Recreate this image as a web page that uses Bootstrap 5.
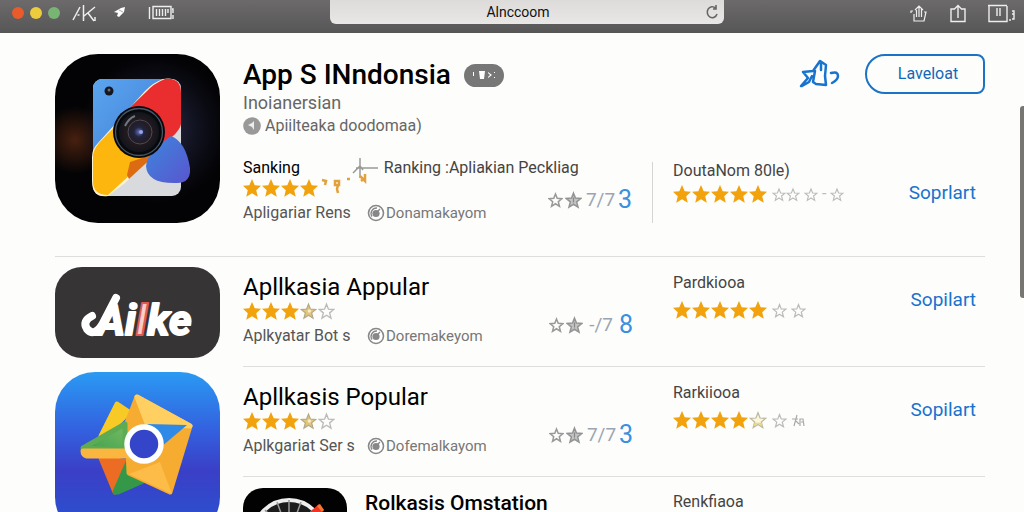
<!DOCTYPE html>
<html lang="id">
<head>
<meta charset="utf-8">
<meta name="viewport" content="width=device-width, initial-scale=1">
<title>App Store Indonesia</title>
<link href="https://cdn.jsdelivr.net/npm/bootstrap@5.3.0/dist/css/bootstrap.min.css" rel="stylesheet">
<style>
body{font-family:Roboto,"Liberation Sans",sans-serif;background:#fdfdfb;color:#555;font-size:16px;line-height:20px}
svg{display:block;flex:none}
button{background:none;border:0;padding:0}
.toolbar{display:grid;grid-template-columns:330px 1fr 300px;height:33px;background:linear-gradient(#6c6a6b,#575656);color:#f4f4f4;flex:none}
.lights{gap:6px;padding:0 12px}
.tools{gap:16px}
.dot{width:12px;height:12px;border-radius:50%}
.dot-r{background:#ea5b2c}.dot-y{background:#eccb3d}.dot-g{background:#78b474}
.addr{height:24px;width:100%;border:0;border-radius:0 0 6px 6px;background:linear-gradient(#dcdbda,#e8e7e6);color:#111;font-size:14px;text-align:center;padding:0 18px 0 0}
.reload{right:4px;top:4px;color:#666}
.actions{gap:20px}
.page-area{padding:21px 39px 0 55px}
.hero{gap:23px;padding-bottom:33px;border-bottom:1px solid #dededc}
.hero-head{height:103px}
.hero-mid{height:66px}
.hero-mid .ranking{height:22px}
.hero-entry{position:relative}
.split{width:1px;height:61px;background:#d5d5d3}
.list-area{gap:23px}
.icons{width:165px;flex:none;padding-top:10px;gap:14px}
h1{font-size:28px;line-height:34px;font-weight:500;color:#000;margin:0}
h2{font-size:24px;line-height:30px;font-weight:400;color:#000;margin:0}
.h2-strong{font-size:21px;font-weight:500}
.pill{width:40px;height:23px;border-radius:12px;background:#777;color:#fff}
.title-line{gap:13px}
.subtitle{font-size:18px;line-height:22px;color:#666}
.maker{line-height:24px;gap:4px;color:#666}
.btn-open{width:120px;height:40px;border:2px solid #1a73c4;border-radius:20px 8px 8px 20px;color:#1268b8;font-size:16px;padding-left:6px}
.entry{display:grid;grid-template-columns:minmax(0,1fr) 220px 92px}
.entry-row{height:110px;border-bottom:1px solid #dededc;padding-top:15px}
.last-row{padding-top:11px}
.entry-mid{margin-right:20px}
.stars{gap:1px;height:18px}
.gold{color:#f2a20c}.pale{color:#bbb}
.tags{margin-top:6px}
.tags span:first-child{width:124px}
.tags span:last-child{color:#777;gap:1px;font-size:15px}
.count{padding-right:20px;gap:2px;color:#999;font-size:20px;line-height:26px;margin-top:40px}
.count b{color:#3b8fe0;font-weight:400;font-size:25px;margin-left:4px}
.count i{font-style:normal;color:#9aa5b3;margin-left:2px;width:26px;text-align:right;white-space:nowrap;font-size:19px}
.label-dark{color:#444}
.rate{padding-top:1px}
.get{color:#1873cf;font-size:19px;line-height:24px;text-decoration:none;text-align:right;padding-right:9px}
.thumb{right:0;top:106px;width:4px;height:192px;background:#777673;border-radius:3px 0 0 3px}
</style>
</head>
<body class="vh-100 overflow-hidden d-flex flex-column position-relative">
<svg width="0" height="0" class="position-absolute" aria-hidden="true">
<symbol id="sf" viewBox="0 0 20 20"><path d="M10 0l3 6.900 7 .6-5.300 4.900 1.700 7.400L10 15.800l-6.400 4 1.700-7.400L0 7.500l7-.6z" fill="currentColor"/></symbol>
<symbol id="so" viewBox="0 0 20 20"><path d="M10 2l2.300 5.800 6.200.4-4.800 4 1.600 6.200L10 15l-5.300 3.400 1.600-6.200-4.800-4 6.200-.4z" fill="none" stroke="currentColor" stroke-width="1.600"/></symbol>
<symbol id="sh" viewBox="0 0 20 20"><path d="M10 2l2.300 5.800 6.200.4-4.800 4 1.600 6.200L10 15l-5.300 3.400 1.600-6.200-4.800-4 6.200-.4z" fill="#e3c679" stroke="#b3aa8a" stroke-width="1.500"/><circle cx="11" cy="10" r="2" fill="#f8edcc"/></symbol>
<symbol id="sq" viewBox="0 0 20 20"><path d="M10 2l2.300 5.800 6.200.4-4.800 4 1.600 6.200L10 15l-5.300 3.400 1.600-6.200-4.800-4 6.200-.4z" fill="#fbf6df" stroke="#bdb89e" stroke-width="1.400"/><path d="M6 13h8l1 4-5-3-5 3z" fill="#eed774"/></symbol>
<symbol id="sr" viewBox="0 0 20 20"><path d="M10 2l2.300 5.800 6.200.4-4.800 4 1.600 6.200L10 15l-5.300 3.400 1.600-6.200-4.800-4 6.200-.4z" fill="none" stroke="#999" stroke-width="2"/></symbol>
<symbol id="sg" viewBox="0 0 20 20"><path d="M10 2l2.300 5.800 6.200.4-4.800 4 1.600 6.200L10 15l-5.300 3.400 1.600-6.200-4.800-4 6.200-.4z" fill="#c4c4c4" stroke="#949494" stroke-width="1.800"/><path d="M10 7v6" stroke="#888" stroke-width="1.500"/></symbol>
<symbol id="eye" viewBox="0 0 18 18"><circle cx="9" cy="9" r="7.500" fill="#fff" stroke="#888" stroke-width="1.600"/><circle cx="9" cy="9.500" r="3.600" fill="#888"/><path d="M5 12.500A5.500 5.500 0 0 1 10 4M10 8l3-3" fill="none" stroke="#888" stroke-width="1.400"/></symbol>
</svg>

<header class="toolbar">
  <div class="d-flex align-items-center pb-2">
    <div class="lights d-flex"><span class="dot dot-r"></span><span class="dot dot-y"></span><span class="dot dot-g"></span></div>
    <div class="tools d-flex align-items-center">
    <svg width="26" height="18" viewBox="1 0 26 18" fill="none" stroke="#eee" stroke-width="1.500"><path d="M2 16L9 3M6.500 11h2M12.500 1v16M13 12L24 3M17 9l6 8M24 13v4"/></svg>
    <svg width="14" height="14" viewBox="0 0 14 14"><path d="M0 6l7-4 4-1-1 5-5 5-2-1 1-3z" fill="#fff"/><path d="M5 4l4 2" stroke="#aaa"/></svg>
    <svg class="ms-1" width="26" height="17" viewBox="0 0 26 17" fill="none" stroke="#eee" stroke-width="1.400"><path d="M1.500 3v12M5 2.500h18v12H5zM8.500 5v7M11.500 5v7M14.500 5v7M17.500 5v7M20 5v4M24 5h1v4M25 11v4"/></svg>
    </div>
  </div>
  <div class="position-relative">
    <input class="addr d-block" type="text" value="Alnccoom" aria-label="Address">
    <button class="reload position-absolute" type="button" aria-label="Reload"><svg width="16" height="16" viewBox="0 0 16 16" fill="none" stroke="currentColor" stroke-width="1.600"><path d="M11.500 4A5 5.500 0 1 0 13 10M12 1v4H9"/></svg></button>
  </div>
  <div class="actions d-flex justify-content-end align-items-start pt-1 pe-2">
    <button type="button" aria-label="Share"><svg width="20" height="20" viewBox="0 0 20 20" fill="none" stroke="#eee" stroke-width="1.200"><path d="M4 7H2v2M5 10v7h10l2-9h-2M10 13V2M6 6l4-4 4 4M7.500 6v7M12.500 5v8"/></svg></button>
    <button type="button" aria-label="Upload"><svg width="18" height="20" viewBox="0 0 18 20" fill="none" stroke="#eee" stroke-width="1.400"><path d="M6 5H2v12.500h14V5h-4M9 14V1.500M5.500 5L9 1.500 12.500 5"/></svg></button>
    <button type="button" aria-label="Tabs"><svg width="29" height="20" viewBox="0 0 29 20" fill="none" stroke="#eee" stroke-width="1.400"><path d="M1 1.500h19M2 2v15.500h18V2M10 4v8M13 4v8M23 15v2M25 7h2v3h-2M27 10v5h-2"/></svg></button>
  </div>
</header>

<main class="page-area">
  <section class="hero d-flex">
    <svg width="165" height="169" viewBox="0 0 165 169" role="img" aria-label="Camera">
      <defs>
        <radialGradient id="g1"><stop offset="0" stop-color="#47200f"/><stop offset="1" stop-color="#47200f" stop-opacity="0"/></radialGradient>
        <radialGradient id="g2"><stop offset="0" stop-color="#2c3152"/><stop offset="1" stop-color="#1a1b30" stop-opacity="0"/></radialGradient>
        <radialGradient id="g3"><stop offset="0" stop-color="#6670b8"/><stop offset=".25" stop-color="#20243c"/><stop offset=".6" stop-color="#241a1e"/><stop offset="1" stop-color="#11151c"/></radialGradient>
        <linearGradient id="g4" x1="0" y1="0" x2="1" y2="1"><stop offset="0" stop-color="#3c87dc"/><stop offset="1" stop-color="#5a55cf"/></linearGradient>
        <linearGradient id="g5" x1="0" y1="0" x2="1" y2="1"><stop offset="0" stop-color="#5ba6ef"/><stop offset="1" stop-color="#3f7cd6"/></linearGradient>
        <clipPath id="c1"><rect x="38" y="25" width="88" height="117" rx="9"/></clipPath>
        <clipPath id="c0"><rect width="165" height="169" rx="43"/></clipPath>
      </defs>
      <g clip-path="url(#c0)"><rect width="165" height="169" fill="#030305"/>
      <circle cx="20" cy="86" r="34" fill="url(#g1)"/>
      <circle cx="100" cy="75" r="75" fill="url(#g2)"/></g>
      <g clip-path="url(#c1)"><rect x="38" y="25" width="88" height="117" fill="#d9dade"/><path d="M38 25h72L38 104z" fill="url(#g5)"/></g>
      <path d="M108 25q18-3 17 14v32q-1 6-9 13L70 129l-17 13q-16 2-16-15v-24q0-8 6-14L90 37q9-9 18-12z" fill="#fbf3d0"/>
      <path d="M110 25q16-2 16 14v31q-1 6-9 13l-20 21-35-38 28-27q9-10 20-14z" fill="#ea2e30"/>
      <path d="M64 68L44 89q-6 7-6 14v24q0 14 15 14l36-33 15-17z" fill="#fdb60d"/><path d="M75 108l27-9-28 26-2-4z" fill="#dd6b12"/>
      <path d="M116 82q15 6 19 32 1 15-13 15-30 1-31-17 1-14 25-30z" fill="url(#g4)"/>
      <circle cx="84" cy="78" r="26" fill="#07090d"/><circle cx="84" cy="78" r="23.500" fill="none" stroke="#4a5666" stroke-width="1.300"/><circle cx="84" cy="78" r="20" fill="url(#g3)"/><circle cx="85" cy="78" r="12" fill="none" stroke="#4a4a58"/><path d="M70 72q4-8 10-10" stroke="#6e7780" stroke-width="2" fill="none"/><circle cx="86" cy="78" r="2" fill="#98a3ee"/>
      <circle cx="54" cy="37" r="4.500" fill="#14171f"/><circle cx="54" cy="36" r="1.500" fill="#66707c"/>
    </svg>
    <div class="flex-grow-1">
      <div class="hero-head d-flex">
        <div class="flex-grow-1">
          <div class="title-line d-flex align-items-center mt-1"><h1>App S INndonsia</h1>
            <span class="pill d-flex align-items-center justify-content-center"><svg width="26" height="12" viewBox="0 0 26 12" fill="#fff"><path d="M2 3h1v4H2zM8 2h6l-1 8h-4zM17 3l4 3-4 3v-1l2-2-2-2zM23 3h1v1h-1zM23 8h1v1h-1z"/></svg></span></div>
          <div class="subtitle">Inoianersian</div>
          <div class="maker d-flex align-items-center"><svg width="18" height="18" viewBox="0 0 18 18"><circle cx="9" cy="9" r="8.800" fill="#999"/><path d="M5 8l4-2 2-2v9L9 10z" fill="#eee"/></svg>Apiilteaka doodomaa)</div>
        </div>
        <div class="d-flex align-items-start gap-4">
          <button class="mt-1" type="button" aria-label="Favourite"><svg width="42" height="32" viewBox="0 0 42 32" fill="none" stroke="#1873cf" stroke-width="2.500" stroke-linejoin="round" stroke-linecap="round"><path d="M2 28l7-8-5-6 10-1 7-10 6 4-1 11 1 9-10-1-3-2 2-11M3 28l7-4 3-6M22 6v6"/><path d="M32 15q7-2 7 3 0 4-6 7" /></svg></button>
          <button class="btn-open" type="button">Laveloat</button>
        </div>
      </div>
      <div class="entry">
        <div class="entry-mid d-flex align-items-end">
        <div class="hero-mid flex-grow-1">
          <div class="ranking d-flex align-items-center"><span class="text-black">Sanking</span><svg class="ms-5" width="32" height="22" viewBox="0 0 32 22" fill="none" stroke="#999" stroke-width="1.500"><path d="M8 11h22M12 1v20M5 16l7-7 3 4"/></svg><span class="ms-1 label-dark text-nowrap">Ranking :Apliakian Peckliag</span></div>
          <div class="d-flex justify-content-between">
            <div>
            <div class="stars d-flex gold"><svg width="18" height="18"><use href="#sf"/></svg><svg width="18" height="18"><use href="#sf"/></svg><svg width="18" height="18"><use href="#sf"/></svg><svg width="18" height="18"><use href="#sf"/></svg>
              <svg class="overflow-visible" width="50" height="18" viewBox="0 0 50 18" fill="none" stroke="#e3a13c" stroke-width="2.500"><path d="M3 1l4 1-1 4M16 2h4v4h-4zM19 6l-1 4 1 4M28 0h3M41-3l5 5V-5M42 2l4-3"/></svg></div>
            <div class="tags d-flex"><span>Apligariar Rens</span><span class="d-flex align-items-center"><svg width="18" height="18"><use href="#eye"/></svg>Donamakayom</span></div>
            </div>
            <div class="count d-flex align-items-center align-self-start mt-2"><svg width="15" height="16"><use href="#sr"/></svg><svg width="17" height="18"><use href="#sg"/></svg><i>7/7</i><b>3</b></div>
          </div>
        </div>
        <div class="split"></div>
        </div>
        <div class="label-dark pt-1">DoutaNom 80le)
          <div class="stars d-flex gold align-items-center mt-1"><svg width="18" height="18"><use href="#sf"/></svg><svg width="18" height="18"><use href="#sf"/></svg><svg width="18" height="18"><use href="#sf"/></svg><svg width="18" height="18"><use href="#sf"/></svg><svg width="18" height="18"><use href="#sf"/></svg><span class="pale d-flex ms-1 align-items-center"><svg width="14" height="15"><use href="#so"/></svg><svg width="14" height="15"><use href="#so"/></svg><svg class="ms-1" width="14" height="15"><use href="#so"/></svg><span class="px-1">-</span><svg width="14" height="15"><use href="#so"/></svg></span></div>
        </div>
        <a class="get pt-4" href="#">Soprlart</a>
      </div>
    </div>
  </section>

  <section class="list-area d-flex">
    <div class="icons d-flex flex-column">
      <svg width="165" height="91" viewBox="0 0 165 91" role="img" aria-label="Milke">
        <defs><linearGradient id="gr"><stop offset="0" stop-color="#e23a35"/><stop offset=".5" stop-color="#f9d2cc"/><stop offset="1" stop-color="#e05550"/></linearGradient></defs>
        <rect width="165" height="91" rx="27" fill="#363435"/>
        <path d="M37 49q-10 5-5 13 7 8 15-4l14-27" fill="none" stroke="#fff" stroke-width="8" stroke-linecap="round"/>
        <text x="42" y="68" font-family="Liberation Sans Narrow, Roboto, sans-serif" font-weight="700" font-style="italic" font-size="43" fill="#fff" stroke="#fff" stroke-width="2" stroke-linejoin="round">Ai<tspan fill="url(#gr)" stroke="#e05a54">l</tspan>ke</text>
      </svg>
      <svg width="165" height="165" viewBox="0 0 165 165" role="img" aria-label="Maps">
        <defs><linearGradient id="gb" x1="0" y1="0" x2="0" y2="1"><stop offset="0" stop-color="#2a9af3"/><stop offset=".35" stop-color="#3361df"/><stop offset=".6" stop-color="#3a3fc6"/><stop offset=".9" stop-color="#2c50cf"/></linearGradient><linearGradient id="gn" x1="0" y1="1" x2="1" y2="0"><stop offset="0" stop-color="#3c9f4e"/><stop offset="1" stop-color="#78bb62"/></linearGradient></defs>
        <rect width="165" height="165" rx="40" fill="url(#gb)"/>
        <g stroke-linejoin="round" stroke-width="5">
        <path d="M62 32l12 8-20 20-8 4z" fill="#f8ca25" stroke="#f8ca25"/>
        <path d="M46 86l14 34 14-30z" fill="#ed6c23" stroke="#ed6c23"/>
        <path d="M60 120l14-32 14 21-25 11z" fill="#349848" stroke="#349848"/>
        <path d="M82 25l53 29-20 66-41-19-2-50z" fill="#f6ab31" stroke="#f6ab31"/>
        <path d="M82 25l53 29-43-3z" fill="#ffd061" stroke="#ffd061"/>
        <path d="M105 90l12 32-43-20z" fill="#fdbb48"/>
        <path d="M28 76l42-24v26z" fill="url(#gn)" stroke="#5dab53"/><path d="M28 79h44l6 5H32q-4-1-4-5z" fill="#fbb63f" stroke="#fbb63f"/>
        </g>
        <path d="M92 52l40 1-26 22z" fill="#2e8ae6"/>
        <circle cx="89" cy="72" r="17" fill="#3545c9" stroke="#fff" stroke-width="5.500"/>
      </svg>
    </div>
    <div class="flex-grow-1">
      <article class="entry entry-row">
        <div class="entry-mid d-flex justify-content-between">
          <div><h2>Apllkasia Appular</h2>
            <div class="stars d-flex gold"><svg width="18" height="18"><use href="#sf"/></svg><svg width="18" height="18"><use href="#sf"/></svg><svg width="18" height="18"><use href="#sf"/></svg><svg width="17" height="18"><use href="#sh"/></svg><svg class="pale" width="17" height="18"><use href="#so"/></svg></div>
            <div class="tags d-flex"><span>Aplkyatar Bot s</span><span class="d-flex align-items-center"><svg width="18" height="18"><use href="#eye"/></svg>Doremakeyom</span></div></div>
          <div class="count d-flex align-items-center align-self-start"><svg width="15" height="16"><use href="#sr"/></svg><svg width="17" height="18"><use href="#sg"/></svg><i>-/7</i><b>8</b></div>
        </div>
        <div class="label-dark rate">Pardkiooa
          <div class="stars d-flex gold align-items-center mt-2"><svg width="18" height="18"><use href="#sf"/></svg><svg width="18" height="18"><use href="#sf"/></svg><svg width="18" height="18"><use href="#sf"/></svg><svg width="18" height="18"><use href="#sf"/></svg><svg width="18" height="18"><use href="#sf"/></svg><span class="pale d-flex ms-1 gap-1"><svg width="15" height="15"><use href="#so"/></svg><svg width="15" height="15"><use href="#so"/></svg></span></div></div>
        <a class="get mt-3" href="#">Sopilart</a>
      </article>
      <article class="entry entry-row">
        <div class="entry-mid d-flex justify-content-between">
          <div><h2>Apllkasis Popular</h2>
            <div class="stars d-flex gold"><svg width="18" height="18"><use href="#sf"/></svg><svg width="18" height="18"><use href="#sf"/></svg><svg width="18" height="18"><use href="#sf"/></svg><svg width="17" height="18"><use href="#sh"/></svg><svg class="pale" width="17" height="18"><use href="#so"/></svg></div>
            <div class="tags d-flex"><span>Aplkgariat Ser s</span><span class="d-flex align-items-center"><svg width="18" height="18"><use href="#eye"/></svg>Dofemalkayom</span></div></div>
          <div class="count d-flex align-items-center align-self-start"><svg width="15" height="16"><use href="#sr"/></svg><svg width="17" height="18"><use href="#sg"/></svg><i>7/7</i><b>3</b></div>
        </div>
        <div class="label-dark rate">Rarkiiooa
          <div class="stars d-flex gold align-items-center mt-2"><svg width="18" height="18"><use href="#sf"/></svg><svg width="18" height="18"><use href="#sf"/></svg><svg width="18" height="18"><use href="#sf"/></svg><svg width="18" height="18"><use href="#sf"/></svg><svg width="18" height="18"><use href="#sq"/></svg><span class="pale d-flex ms-1 gap-1"><svg width="15" height="15"><use href="#so"/></svg><svg width="15" height="15" viewBox="0 0 15 15" fill="none" stroke="#aaa" stroke-width="1.200"><path d="M1 6h6M6 2L3 13M5 8l3 3M9 13V6h3l1 7M10 9h2"/></svg></span></div></div>
        <a class="get mt-3" href="#">Sopilart</a>
      </article>
      <article class="entry entry-row last-row">
        <div class="entry-mid d-flex">
          <svg class="me-3" width="106" height="104" viewBox="0 0 106 104" role="img" aria-label="Gauge"><rect width="104" height="104" rx="20" fill="#020202"/><circle cx="46" cy="47" r="35" fill="#1c1c1c" stroke="#eee" stroke-width="4"/><path d="M46 12v70M34 14l24 66M58 14L34 80M22 22l48 50M70 22L22 72M14 34l64 26M78 34L14 60" stroke="#999" stroke-width="1.500"/><circle cx="46" cy="47" r="20" fill="#222"/><path d="M44 44L76 16l5 6-32 28z" fill="#ee3423"/><path d="M74 18l3-2 4 6-2 2z" fill="#f4772e"/></svg>
          <h2 class="h2-strong">Rolkasis Omstation</h2>
        </div>
        <div class="label-dark pt-1">Renkfiaoa</div>
        <a class="get mt-4" href="#">Sopilart</a>
      </article>
    </div>
  </section>
</main>
<div class="thumb position-absolute" aria-hidden="true"></div>
<script src="https://cdn.jsdelivr.net/npm/bootstrap@5.3.0/dist/js/bootstrap.bundle.min.js"></script>
</body>
</html>
